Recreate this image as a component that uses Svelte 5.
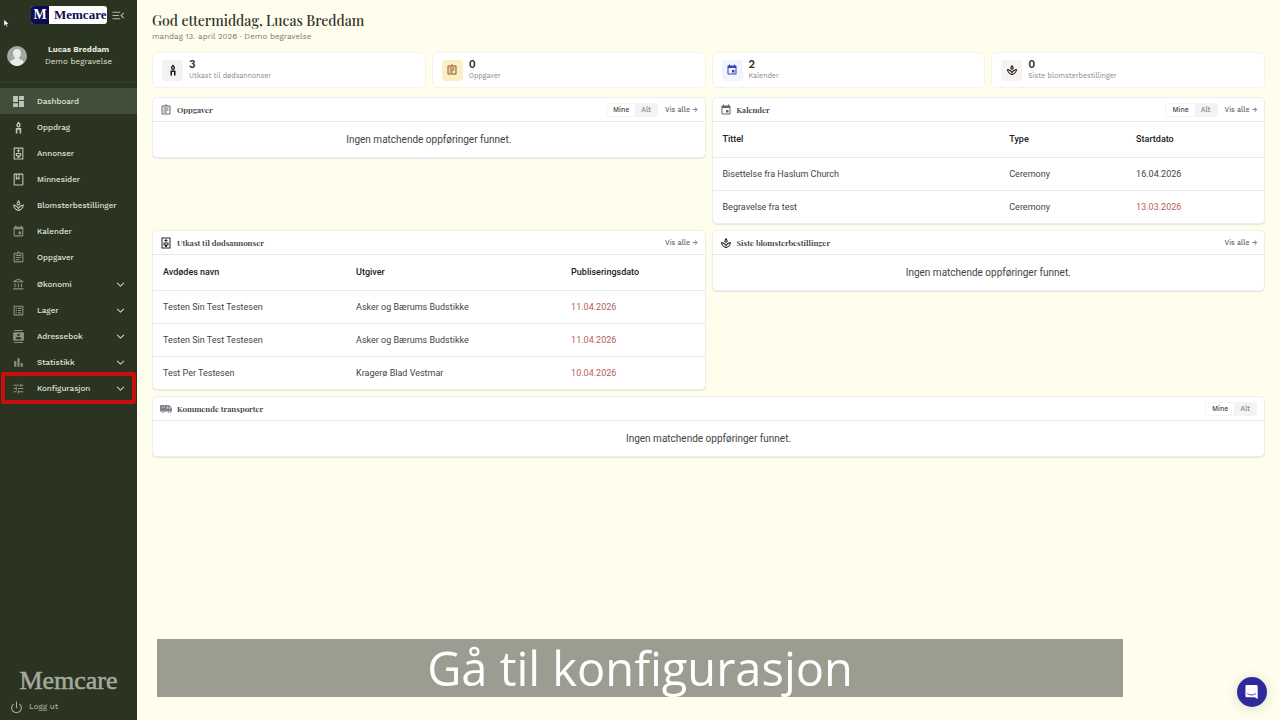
<script lang="ts">
	type NavItem = { label: string; icon: string; expandable?: boolean; active?: boolean; dim?: boolean; marked?: boolean };
	type Cell = { text: string; overdue?: boolean };

	const nav: NavItem[] = [
		{ label: 'Dashboard', icon: 'dashboard', active: true },
		{ label: 'Oppdrag', icon: 'candle' },
		{ label: 'Annonser', icon: 'notice' },
		{ label: 'Minnesider', icon: 'book' },
		{ label: 'Blomsterbestillinger', icon: 'flower' },
		{ label: 'Kalender', icon: 'event', dim: true },
		{ label: 'Oppgaver', icon: 'task', dim: true },
		{ label: 'Økonomi', icon: 'bank', expandable: true, dim: true },
		{ label: 'Lager', icon: 'list', expandable: true, dim: true },
		{ label: 'Adressebok', icon: 'contacts', expandable: true, dim: true },
		{ label: 'Statistikk', icon: 'chart', expandable: true, dim: true },
		{ label: 'Konfigurasjon', icon: 'tune', expandable: true, dim: true, marked: true }
	];

	const stats = [
		{ count: 3, label: 'Utkast til dødsannonser', icon: 'candle', tone: 'grey' },
		{ count: 0, label: 'Oppgaver', icon: 'task', tone: 'amber' },
		{ count: 2, label: 'Kalender', icon: 'event', tone: 'blue' },
		{ count: 0, label: 'Siste blomsterbestillinger', icon: 'flower', tone: 'rose' }
	];

	const events: Cell[][] = [
		[{ text: 'Bisettelse fra Haslum Church' }, { text: 'Ceremony' }, { text: '16.04.2026' }],
		[{ text: 'Begravelse fra test' }, { text: 'Ceremony' }, { text: '13.03.2026', overdue: true }]
	];

	const drafts: Cell[][] = [
		[{ text: 'Testen Sin Test Testesen' }, { text: 'Asker og Bærums Budstikke' }, { text: '11.04.2026', overdue: true }],
		[{ text: 'Testen Sin Test Testesen' }, { text: 'Asker og Bærums Budstikke' }, { text: '11.04.2026', overdue: true }],
		[{ text: 'Test Per Testesen' }, { text: 'Kragerø Blad Vestmar' }, { text: '10.04.2026', overdue: true }]
	];

	// 24x24 icon outlines
	const icons: Record<string, string> = {
		dashboard: 'M2 13h9V2H2v11zm0 9h9v-7H2v7zm11 0h9V11h-9v11zm0-20v7h9V2h-9z',
		candle: 'M12 1c2.600 3 4 4.800 4 6.800a4 4 0 0 1-8 0C8 5.800 9.400 4 12 1zm0 4c-1 1.400-1.500 2.100-1.500 2.900a1.500 1.500 0 0 0 3 0c0-.8-.5-1.500-1.500-2.900zM7 13h10v10h-3v-7h-4v7H7z',
		notice: 'M3 1h18v22H3V1zm2 2v18h14V3H5zm6 1h2v2h2v2h-2v2h-2V8H9V6h2V4zM7 11h10v6h-3v3h-4v-3H7v-6zm2 2v2h6v-2H9z',
		book: 'M19 1H5c-1.100 0-2 .9-2 2v18c0 1.100.9 2 2 2h14c1.100 0 2-.9 2-2V3c0-1.100-.9-2-2-2zM9 3h3v6l-1.500-1L9 9V3zm10 18H5V3h2v10l3.500-2.500L14 13V3h5v18z',
		flower: 'M15.490 9.630c-.18-2.790-1.310-5.510-3.430-7.630-2.140 2.140-3.320 4.860-3.550 7.630 1.280.68 2.460 1.560 3.490 2.630 1.030-1.060 2.210-1.940 3.490-2.630zM12 5.450c.7 1 1.150 2.100 1.350 3.200-.5.3-.93.600-1.350.93-.42-.33-.88-.65-1.350-.93.2-1.150.65-2.250 1.350-3.200zM12 15.450C9.850 12.170 6.180 10 2 10c0 5.320 3.360 9.820 8.030 11.490.63.23 1.290.4 1.970.51.68-.12 1.330-.29 1.970-.51C18.640 19.820 22 15.320 22 10c-4.180 0-7.850 2.170-10 5.450zm1.320 4.150c-.44.15-.88.27-1.330.37-.44-.09-.87-.21-1.280-.36-3.290-1.180-5.700-3.990-6.450-7.350 2.560.75 4.660 2.300 6.080 4.280L12 19.090l1.670-2.540c1.400-2 3.500-3.540 6.070-4.290-.76 3.350-3.130 6.160-6.420 7.340z',
		event: 'M17 12h-5v5h5v-5zM16 1v2H8V1H6v2H5c-1.110 0-1.990.9-1.990 2L3 19c0 1.100.89 2 2 2h14c1.100 0 2-.9 2-2V5c0-1.100-.9-2-2-2h-1V1h-2zm3 18H5V8h14v11z',
		task: 'M7 15h7v2H7zm0-4h10v2H7zm0-4h10v2H7zm12-4h-4.180C14.400 1.840 13.300 1 12 1s-2.400.84-2.820 2H5c-1.100 0-2 .9-2 2v14c0 1.100.9 2 2 2h14c1.100 0 2-.9 2-2V5c0-1.100-.9-2-2-2zm-7-.25c.41 0 .75.34.75.75s-.34.75-.75.75-.75-.34-.75-.75.34-.75.75-.75zM19 19H5V5h14v14z',
		bank: 'M6.500 10h-2v7h2v-7zm6 0h-2v7h2v-7zm8.500 9H2v2h19v-2zm-2.500-9h-2v7h2v-7zm-7-6.740L16.710 6H6.290l5.210-2.740m0-2.260L2 6v2h19V6l-9.500-5z',
		list: 'M19 5v14H5V5h14m1.100-2H3.900c-.5 0-.9.4-.9.9v16.200c0 .4.4.9.9.9h16.200c.4 0 .9-.5.9-.9V3.900c0-.5-.5-.9-.9-.9zM11 7h6v2h-6V7zm0 4h6v2h-6v-2zm0 4h6v2h-6zM7 7h2v2H7zm0 4h2v2H7zm0 4h2v2H7z',
		contacts: 'M20 0H4v2h16V0zM4 24h16v-2H4v2zM20 4H4c-1.100 0-2 .9-2 2v12c0 1.100.9 2 2 2h16c1.100 0 2-.9 2-2V6c0-1.100-.9-2-2-2zm-8 2.750c1.240 0 2.250 1.010 2.250 2.250s-1.010 2.250-2.250 2.250S9.750 10.240 9.750 9 10.760 6.750 12 6.750zM17 17H7v-1.500c0-1.670 3.330-2.500 5-2.500s5 .83 5 2.500V17z',
		chart: 'M4 9h4v11H4zm12 4h4v7h-4zm-6-9h4v16h-4z',
		tune: 'M3 17v2h6v-2H3zM3 5v2h10V5H3zm10 16v-2h8v-2h-8v-2h-2v6h2zM7 9v2H3v2h4v2h2V9H7zm14 4v-2H11v2h10zm-6-4h2V7h4V5h-4V3h-2v6z',
		collapse: 'M1 19h14v-2H1v2zM1 13h12v-2H1v2zm0-8v2h14V5H1zm21.500 11.100L18.400 12l4.100-4.100L21 6.400 15.400 12l5.600 5.600z',
		chevron: 'M5.400 7.600 12 14.200l6.600-6.600L20 9l-8 8-8-8z',
		power: 'M13 1h-2v12h2V1zm5 3.500L16.600 6a8 8 0 1 1-9.200 0L6 4.500a10 10 0 1 0 12 0z',
		van: 'M1 4h14l5 1 4 6v6h-2a3 3 0 0 1-6 0H9a3 3 0 0 1-6 0H0V5zm3 3v3h1V7zm4 0v3h1V7zm6-1v6h1V6zm4 2v3h3l-2-3zM6 16a1.500 1.500 0 1 0 0 3 1.500 1.500 0 0 0 0-3zm13 0a1.500 1.500 0 1 0 0 3 1.500 1.500 0 0 0 0-3z'
	};

	let filters = $state<Record<string, string>>({ tasks: 'Mine', calendar: 'Mine', transport: 'Mine' });
</script>

{#snippet icon(name: string)}
	<svg class="icon" viewBox="0 0 24 24" aria-hidden="true"><path d={icons[name]} fill-rule="evenodd" /></svg>
{/snippet}

{#snippet panelHead(title: string, iconName: string, filter: string, link: boolean)}
	<header class="panel-head">
		<span class="panel-icon {iconName}">{@render icon(iconName)}</span>
		<h2>{title}</h2>
		{#if filter}
			<div class="toggle">
				{#each ['Mine', 'Alt'] as option}
					<button class:on={filters[filter] === option} onclick={() => (filters[filter] = option)}>{option}</button>
				{/each}
			</div>
		{/if}
		{#if link}
			<a class="see-all" href="#alle">Vis alle →</a>
		{/if}
	</header>
{/snippet}

{#snippet table(headings: string[], rows: Cell[][], layout: string)}
	<table class={layout}>
		<thead>
			<tr>
				{#each headings as heading}
					<th scope="col">{heading}</th>
				{/each}
			</tr>
		</thead>
		<tbody>
			{#each rows as row}
				<tr>
					{#each row as cell}
						<td class:overdue={cell.overdue}>{cell.text}</td>
					{/each}
				</tr>
			{/each}
		</tbody>
	</table>
{/snippet}

<div class="shell">
	<aside class="sidebar">
		<div class="brand">
			<div class="logo"><span class="logo-mark">M</span><span class="logo-name">Memcare</span></div>
			<button class="collapse" aria-label="Skjul meny">{@render icon('collapse')}</button>
		</div>

		<div class="user">
			<svg class="avatar" viewBox="0 0 20 20" aria-hidden="true">
				<circle cx="10" cy="10" r="10" fill="#a5a7a3" />
				<path d="M10 3c2.500 0 4 1.800 4 4.200 0 1.900-.8 3.500-1.900 4.300v1.300c1.800.8 3.800 1.300 4.700 3.400A9.800 9.800 0 0 1 10 20a9.800 9.800 0 0 1-6.800-3.800c.9-2.100 2.900-2.600 4.700-3.400v-1.300C6.800 10.700 6 9.100 6 7.200 6 4.800 7.500 3 10 3z" fill="#e9ebe8" />
			</svg>
			<div class="user-text">
				<strong>Lucas Breddam</strong>
				<span>Demo begravelse</span>
			</div>
		</div>

		<nav>
			<ul>
				{#each nav as item}
					<li class:expandable={item.expandable} class:marked={item.marked}>
						<a href="#{item.icon}" class:active={item.active} class:dim={item.dim}>
							{@render icon(item.icon)}
							<span class="nav-label">{item.label}</span>
							{#if item.expandable}
								<span class="chevron">{@render icon('chevron')}</span>
							{/if}
						</a>
					</li>
				{/each}
			</ul>
		</nav>

		<div class="sidebar-foot">
			<div class="wordmark">Memcare</div>
			<button class="logout">{@render icon('power')}Logg ut</button>
		</div>
	</aside>

	<main>
		<h1>God ettermiddag, Lucas Breddam</h1>
		<p class="date">mandag 13. april 2026 · Demo begravelse</p>

		<div class="stats">
			{#each stats as stat}
				<div class="stat">
					<span class="stat-icon {stat.tone}">{@render icon(stat.icon)}</span>
					<div>
						<div class="count">{stat.count}</div>
						<div class="stat-label">{stat.label}</div>
					</div>
				</div>
			{/each}
		</div>

		<div class="panels">
			<section class="panel">
				{@render panelHead('Oppgaver', 'task', 'tasks', true)}
				<p class="empty">Ingen matchende oppføringer funnet.</p>
			</section>

			<section class="panel">
				{@render panelHead('Kalender', 'event', 'calendar', true)}
				{@render table(['Tittel', 'Type', 'Startdato'], events, 'events')}
			</section>

			<section class="panel">
				{@render panelHead('Utkast til dødsannonser', 'notice', '', true)}
				{@render table(['Avdødes navn', 'Utgiver', 'Publiseringsdato'], drafts, 'drafts')}
			</section>

			<section class="panel">
				{@render panelHead('Siste blomsterbestillinger', 'flower', '', true)}
				<p class="empty">Ingen matchende oppføringer funnet.</p>
			</section>

			<section class="panel wide">
				{@render panelHead('Kommende transporter', 'van', 'transport', false)}
				<p class="empty">Ingen matchende oppføringer funnet.</p>
			</section>
		</div>
	</main>
</div>

<div class="caption">Gå til konfigurasjon</div>

<button class="chat" aria-label="Åpne chat">
	<svg viewBox="0 0 16 18" aria-hidden="true">
		<path d="M2 1h11a1.500 1.500 0 0 1 1.500 1.500V17L11 15H2a1.500 1.500 0 0 1-1.500-1.500v-11A1.500 1.500 0 0 1 2 1z" fill="#fff" />
		<path d="M3 11c2.800 2 6.200 2 9 0" fill="none" stroke="#2f2a9c" stroke-width="1" stroke-linecap="round" />
	</svg>
</button>

<svg class="pointer" viewBox="0 0 8 12" aria-hidden="true">
	<path d="M1 1v8l2-1.600 1.300 3 1.300-.6-1.300-2.800H7z" fill="#fff" stroke="#111" stroke-width=".6" />
</svg>

<style>
	:global(body) {
		background: #fffdeb;
		color: #333;
		font-family: 'Work Sans', Inter, 'Open Sans', sans-serif;
	}

	button {
		border: 0;
		padding: 0;
		background: none;
		color: inherit;
		font: inherit;
		cursor: pointer;
	}

	a {
		color: inherit;
		text-decoration: none;
	}

	h1, h2, p, ul {
		margin: 0;
		padding: 0;
	}

	.icon {
		display: block;
		flex: none;
		width: 13px;
		height: 13px;
		fill: currentColor;
	}

	.shell {
		display: grid;
		grid-template-columns: 137px 1fr;
		min-height: 100vh;
	}

	/* Sidebar */
	.sidebar {
		display: flex;
		flex-direction: column;
		background: #2a3420;
		color: #e0e3dc;
	}

	.brand {
		display: flex;
		align-items: center;
		gap: 5px;
		padding: 6px 0 0 31px;
	}

	.logo {
		display: flex;
		align-items: center;
		height: 18px;
		width: 76px;
		border-radius: 3px;
		overflow: hidden;
		background: #fff;
		color: #0d0b52;
		font-family: 'Liberation Serif', serif;
		font-weight: 700;
	}

	.logo-mark {
		flex: none;
		width: 18px;
		line-height: 18px;
		text-align: center;
		background: #0d0b52;
		color: #fff;
		font-size: 14px;
	}

	.logo-name {
		padding-left: 5px;
		font-size: 13px;
		line-height: 18px;
	}

	.collapse {
		color: #aeb4a6;
	}

	.user {
		display: flex;
		align-items: center;
		gap: 10px;
		padding: 20px 17px 14px 7px;
		border-bottom: 1px solid #363f2d;
	}

	.avatar {
		flex: none;
		width: 20px;
		height: 20px;
	}

	.user-text {
		display: flex;
		flex: 1;
		flex-direction: column;
		align-items: center;
		font-size: 8px;
		line-height: 12px;
		white-space: nowrap;
	}

	nav {
		margin-top: 5px;
	}

	ul {
		list-style: none;
	}

	li a {
		display: flex;
		align-items: center;
		gap: 12px;
		height: 26px;
		padding: 0 11px 0 12px;
		font-size: 8px;
		font-weight: 500;
	}

	li:not(.expandable) + li.expandable {
		margin-top: 1px;
	}

	li a.active {
		background: #424d3a;
	}

	li a > .icon {
		color: #c0c5ba;
	}

	li a.dim > .icon {
		color: #899080;
	}

	.nav-label {
		flex: 1;
		white-space: nowrap;
	}

	.chevron .icon {
		width: 11px;
		height: 11px;
	}

	.marked {
		position: relative;
	}

	.marked::after {
		content: '';
		position: absolute;
		inset: -3px 1px -3px 1px;
		border: 4px solid #c90f10;
		border-radius: 3px;
		pointer-events: none;
	}

	.sidebar-foot {
		margin-top: auto;
		padding: 0 10px 6px;
		color: #a4aa9e;
	}

	.wordmark {
		text-align: center;
		font-family: 'Liberation Serif', serif;
		font-size: 26px;
		line-height: 34px;
		padding-bottom: 2px;
		-webkit-text-stroke: thin #a4aa9e;
	}

	.logout {
		display: flex;
		align-items: center;
		gap: 6px;
		font-size: 8px;
		line-height: 14px;
		font-weight: 500;
	}

	/* Main column */
	main {
		padding: 11px 15px;
	}

	h1 {
		font-family: 'Playfair Display', 'Liberation Serif', serif;
		font-size: 14px;
		font-weight: 500;
		line-height: 20px;
		color: #30332f;
	}

	.date {
		font-size: 8px;
		line-height: 12px;
		color: #777;
	}

	.stats {
		display: grid;
		grid-template-columns: repeat(4, 1fr);
		gap: 6px;
		margin: 9px 0;
	}

	.stat {
		display: flex;
		align-items: center;
		gap: 6px;
		height: 36px;
		box-sizing: border-box;
		padding: 0 9px;
		border: 1px solid #f5f4ec;
		border-radius: 5px;
		background: #fff;
	}

	.stat-icon {
		display: grid;
		place-items: center;
		width: 21px;
		height: 21px;
		border-radius: 4px;
	}

	.stat-icon.grey {
		background: #f2f2f0;
		color: #111;
	}

	.stat-icon.amber {
		background: #fbefc4;
		color: #8a5722;
	}

	.stat-icon.blue {
		background: #eff4fd;
		color: #3141b5;
	}

	.stat-icon.rose {
		background: #f7f3f1;
		color: #111;
	}

	.stat-icon .icon {
		width: 12px;
		height: 12px;
	}

	.count {
		font-size: 11px;
		font-weight: 600;
		line-height: 12px;
	}

	.stat-label {
		font-size: 7px;
		line-height: 10px;
		color: #888;
	}

	.panels {
		display: grid;
		grid-template-columns: 1fr 1fr;
		align-items: start;
		gap: 6px;
	}

	.panel {
		border: 1px solid #eeeeea;
		border-radius: 5px;
		background: #fff;
		box-shadow: 0 1px 1px #e6e6e2;
	}

	.wide {
		grid-column: 1 / -1;
	}

	.panel-head {
		display: flex;
		align-items: center;
		height: 23px;
		padding: 0 7px;
		border-bottom: 1px solid #e6e6e6;
	}

	.panel-icon {
		margin-right: 5px;
		color: #666;
	}

	.panel-icon .icon {
		width: 12px;
		height: 12px;
	}

	.panel-icon.notice,
	.panel-icon.flower {
		color: #222;
	}

	.panel-icon.van {
		color: #80838a;
	}

	h2 {
		margin-right: auto;
		font-family: 'Playfair Display', 'Liberation Serif', serif;
		font-size: 8px;
		font-weight: 600;
		line-height: 12px;
		color: #333;
	}

	.toggle {
		display: flex;
		padding: 1px;
		border-radius: 3px;
		background: #f3f3f4;
		font-size: 7px;
		font-weight: 500;
		line-height: 12px;
		color: #888;
	}

	.toggle button {
		padding: 0 6px;
		border-radius: 2px;
	}

	.toggle .on {
		background: #fff;
		color: #444;
	}

	.see-all {
		margin-left: 7px;
		font-size: 7px;
		font-weight: 500;
		color: #666;
	}

	.empty {
		padding: 9px 0;
		text-align: center;
		font-family: Roboto, sans-serif;
		font-size: 10px;
		line-height: 17px;
		color: #444;
	}

	table {
		width: 100%;
		table-layout: fixed;
		border-collapse: collapse;
		font-family: Roboto, sans-serif;
		font-size: 9px;
		color: #444;
	}

	th, td {
		box-sizing: border-box;
		height: 33px;
		padding: 0 0 0 10px;
		text-align: left;
	}

	th {
		height: 35px;
		font-weight: 500;
		color: #222;
	}

	tbody tr {
		border-top: 1px solid #ebebeb;
	}

	.overdue {
		color: #b5605a;
	}

	.events th:nth-child(1) {
		width: 52%;
	}

	.events th:nth-child(2) {
		width: 23%;
	}

	.drafts th:nth-child(1) {
		width: 35%;
	}

	.drafts th:nth-child(2) {
		width: 39%;
	}

	/* Overlays */
	.caption {
		position: fixed;
		left: 157px;
		right: 157px;
		bottom: 23px;
		background: #9c9c90;
		color: #fff;
		text-align: center;
		font-family: 'Open Sans', sans-serif;
		font-size: 47px;
		line-height: 58px;
	}

	.chat {
		position: fixed;
		right: 13px;
		bottom: 13px;
		display: grid;
		place-items: center;
		width: 30px;
		height: 30px;
		border-radius: 50%;
		background: #2f2a9c;
		box-shadow: 0 1px 12px rgba(0, 0, 0, 0.15);
	}

	.chat svg {
		width: 14px;
		height: 16px;
	}

	.pointer {
		position: fixed;
		left: 3px;
		top: 18px;
		width: 7px;
		height: 11px;
	}
</style>
